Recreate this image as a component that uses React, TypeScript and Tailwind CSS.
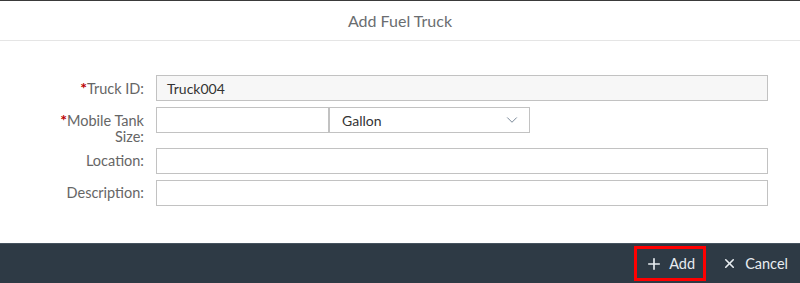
import { ChevronDown, Plus, X } from 'lucide-react'

const font = { fontFamily: 'Lato, "Noto Sans", Arial, sans-serif' }

function Label({ text, required }: { text: React.ReactNode; required?: boolean }) {
  return (
    <div className="w-[144px] shrink-0 text-right text-[14.5px] leading-[16px] text-[#666666] pt-[5px]">
      {required && <span className="text-[#bb0000] text-[16px] font-bold">*</span>}
      {text}
    </div>
  )
}

export default function App() {
  return (
    <div className="w-[800px] h-[283px] bg-white flex flex-col overflow-hidden" style={font}>
      <div className="h-[1px] bg-[#3a3a3a]" />
      <div className="h-[40px] flex items-center justify-center border-b border-[#e5e5e5] text-[16px] text-[#6a6d70]">
        Add Fuel Truck
      </div>
      <div className="flex-1 flex flex-col gap-[6px] pt-[34px]">
        <div className="flex items-start gap-[12px]">
          <Label text="Truck ID:" required />
          <div className="w-[612px] h-[26px] border border-[#c2c2c2] bg-[#f7f7f7] flex items-center px-[10px] text-[14px] text-[#333333]">
            Truck004
          </div>
        </div>
        <div className="flex items-start gap-[12px] h-[35px]">
          <Label text={<>Mobile Tank<br />Size:</>} required />
          <div className="flex">
            <div className="w-[173px] h-[26px] border border-[#c2c2c2] bg-white" />
            <div className="w-[201px] h-[26px] border border-[#c2c2c2] bg-white flex items-center justify-between pl-[12px] pr-[8px] text-[14px] text-[#333333]">
              Gallon
              <ChevronDown size={18} strokeWidth={1.2} className="text-[#6a7b8c]" />
            </div>
          </div>
        </div>
        <div className="flex items-start gap-[12px]">
          <Label text="Location:" />
          <div className="w-[612px] h-[26px] border border-[#c2c2c2] bg-white" />
        </div>
        <div className="flex items-start gap-[12px]">
          <Label text="Description:" />
          <div className="w-[612px] h-[26px] border border-[#c2c2c2] bg-white" />
        </div>
      </div>
      <div className="h-[40px] bg-[#2e3a45] border-t border-[#46535f] flex items-center justify-end pr-[12px] gap-[16px] text-[14.5px] text-[#e8edf1]">
        <div className="w-[72px] h-[35px] border-[3px] border-[#ff0000] flex items-center justify-center gap-[6px]">
          <Plus size={18} strokeWidth={2.2} />
          Add
        </div>
        <div className="flex items-center gap-[8px]">
          <X size={15} strokeWidth={2.6} />
          Cancel
        </div>
      </div>
    </div>
  )
}
